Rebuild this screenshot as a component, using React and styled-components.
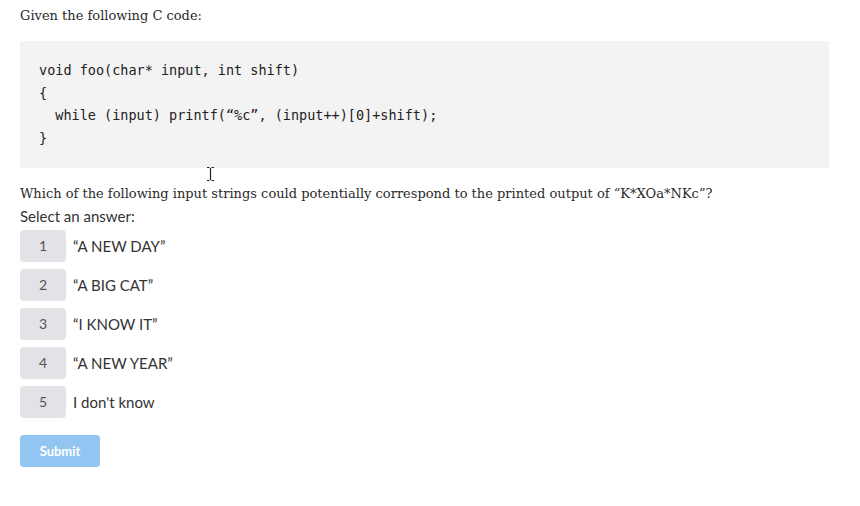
import React from "react";
import styled, { createGlobalStyle } from "styled-components";

const GlobalStyle = createGlobalStyle`
  body {
    margin: 0;
    background: #ffffff;
  }
`;

const Page = styled.div`
  position: relative;
  width: 860px;
  height: 506px;
  padding: 6px 31px 0 20px;
  box-sizing: border-box;
  color: #333333;
`;

const Prose = styled.p`
  margin: 0;
  font-family: "DejaVu Serif", Georgia, serif;
  font-size: 13px;
  line-height: 20px;
  color: #2a2a2a;
`;

const CodeBlock = styled.pre`
  margin: 15px 0 16px;
  padding: 18px 19px 18px;
  background: #f3f3f3;
  font-family: "DejaVu Sans Mono", "Liberation Mono", monospace;
  font-size: 13.5px;
  line-height: 22.7px;
  color: #222222;
`;

const Hint = styled.div`
  margin: 2px 0 4px;
  font-family: Lato, "Liberation Sans", sans-serif;
  font-size: 15px;
  line-height: 20px;
  color: #333333;
`;

const Options = styled.div`
  display: flex;
  flex-direction: column;
  gap: 7px;
`;

const Option = styled.label`
  display: flex;
  align-items: center;
  gap: 7px;
  font-family: Lato, "Liberation Sans", sans-serif;
  font-size: 15px;
  color: #333333;
  cursor: pointer;
`;

const Key = styled.span`
  display: flex;
  align-items: center;
  justify-content: center;
  width: 46px;
  height: 32px;
  border-radius: 4px;
  background: #e3e3e7;
  color: #555555;
  font-size: 14px;
`;

const Submit = styled.button`
  margin-top: 17px;
  width: 80px;
  height: 32px;
  border: none;
  border-radius: 4px;
  background: #92c5f1;
  color: #ffffff;
  font-family: Lato, "Liberation Sans", sans-serif;
  font-weight: 700;
  font-size: 13px;
`;

const Cursor = styled.svg`
  position: absolute;
  left: 206px;
  top: 166px;
`;

const options = ["“A NEW DAY”", "“A BIG CAT”", "“I KNOW IT”", "“A NEW YEAR”", "I don't know"];

const code = `void foo(char* input, int shift)
{
  while (input) printf(“%c”, (input++)[0]+shift);
}`;

export default function App() {
  return (
    <Page>
      <GlobalStyle />
      <Prose>Given the following C code:</Prose>
      <CodeBlock>{code}</CodeBlock>
      <Prose>Which of the following input strings could potentially correspond to the printed output of “K*XOa*NKc”?</Prose>
      <Hint>Select an answer:</Hint>
      <Options>
        {options.map((text, i) => (
          <Option key={i}>
            <Key>{i + 1}</Key>
            {text}
          </Option>
        ))}
      </Options>
      <Submit>Submit</Submit>
      <Cursor width="9" height="16" viewBox="0 0 9 16">
        <path d="M1 1.5h2.5M5.5 1.5H8M4.5 2v12M1 14.5h2.5M5.5 14.5H8" stroke="#222" strokeWidth="1.2" fill="none" />
      </Cursor>
    </Page>
  );
}
